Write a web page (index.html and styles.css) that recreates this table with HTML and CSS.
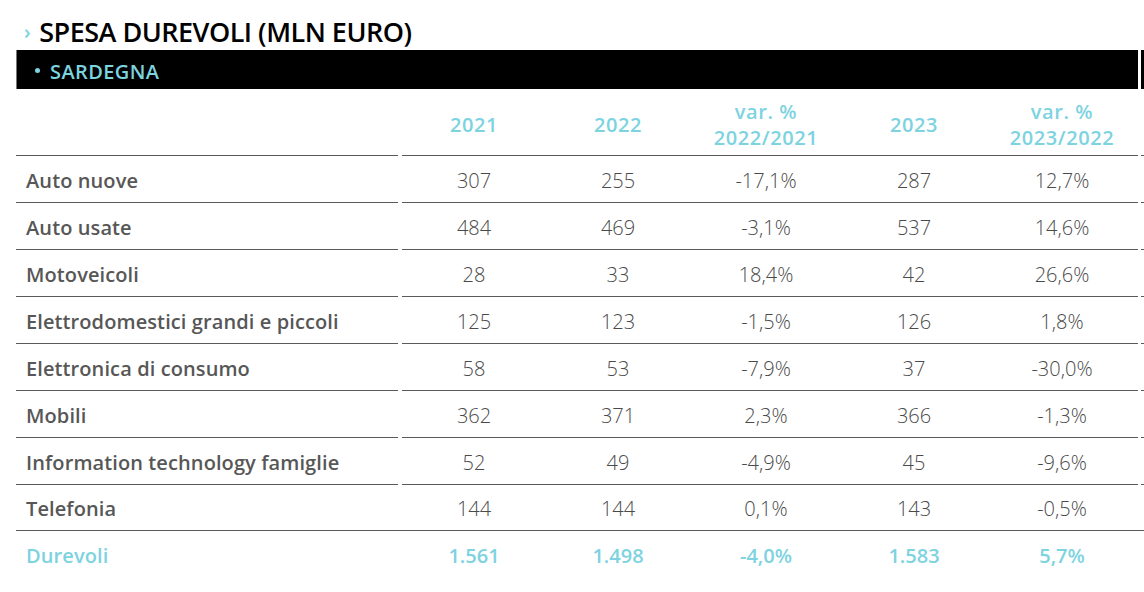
FILE: index.html
```html
<!DOCTYPE html>
<html lang="it">
<head>
<meta charset="utf-8">
<title>Spesa durevoli</title>
<link rel="stylesheet" href="styles.css">
</head>
<body>
<div class="page">
  <h1 class="title"><span class="chev">›</span>SPESA DUREVOLI (MLN EURO)</h1>
  <div class="bar">
    <div class="bar-main"><span class="dot"></span>SARDEGNA</div>
    <div class="bar-extra"></div>
  </div>
  <div class="table">
    <div class="row head">
      <div class="label"></div>
      <div class="vals">
        <div class="c n">2021</div>
        <div class="c n">2022</div>
        <div class="c w">var. %<br>2022/2021</div>
        <div class="c n">2023</div>
        <div class="c w">var. %<br>2023/2022</div>
      </div>
      <div class="extra"></div>
    </div>
    <div class="row">
      <div class="label">Auto nuove</div>
      <div class="vals"><div class="c n">307</div><div class="c n">255</div><div class="c w">-17,1%</div><div class="c n">287</div><div class="c w">12,7%</div></div>
      <div class="extra"></div>
    </div>
    <div class="row">
      <div class="label">Auto usate</div>
      <div class="vals"><div class="c n">484</div><div class="c n">469</div><div class="c w">-3,1%</div><div class="c n">537</div><div class="c w">14,6%</div></div>
      <div class="extra"></div>
    </div>
    <div class="row">
      <div class="label">Motoveicoli</div>
      <div class="vals"><div class="c n">28</div><div class="c n">33</div><div class="c w">18,4%</div><div class="c n">42</div><div class="c w">26,6%</div></div>
      <div class="extra"></div>
    </div>
    <div class="row">
      <div class="label">Elettrodomestici grandi e piccoli</div>
      <div class="vals"><div class="c n">125</div><div class="c n">123</div><div class="c w">-1,5%</div><div class="c n">126</div><div class="c w">1,8%</div></div>
      <div class="extra"></div>
    </div>
    <div class="row">
      <div class="label">Elettronica di consumo</div>
      <div class="vals"><div class="c n">58</div><div class="c n">53</div><div class="c w">-7,9%</div><div class="c n">37</div><div class="c w">-30,0%</div></div>
      <div class="extra"></div>
    </div>
    <div class="row">
      <div class="label">Mobili</div>
      <div class="vals"><div class="c n">362</div><div class="c n">371</div><div class="c w">2,3%</div><div class="c n">366</div><div class="c w">-1,3%</div></div>
      <div class="extra"></div>
    </div>
    <div class="row">
      <div class="label">Information technology famiglie</div>
      <div class="vals"><div class="c n">52</div><div class="c n">49</div><div class="c w">-4,9%</div><div class="c n">45</div><div class="c w">-9,6%</div></div>
      <div class="extra"></div>
    </div>
    <div class="row solid">
      <div class="label">Telefonia</div>
      <div class="vals"><div class="c n">144</div><div class="c n">144</div><div class="c w">0,1%</div><div class="c n">143</div><div class="c w">-0,5%</div></div>
      <div class="extra"></div>
    </div>
    <div class="row total">
      <div class="label">Durevoli</div>
      <div class="vals"><div class="c n">1.561</div><div class="c n">1.498</div><div class="c w">-4,0%</div><div class="c n">1.583</div><div class="c w">5,7%</div></div>
      <div class="extra"></div>
    </div>
  </div>
</div>
</body>
</html>
```

FILE: styles.css
```css
html, body {
  margin: 0;
  padding: 0;
  background: #ffffff;
  overflow: hidden;
}

body {
  font-family: "Open Sans", "Noto Sans", sans-serif;
  color: #4d4d4d;
}

.page {
  width: 1240px;
  padding-left: 16px;
}

.title {
  margin: 0;
  padding: 14px 0 0 8px;
  height: 36px;
  box-sizing: content-box;
  font-size: 27px;
  line-height: 36px;
  font-weight: 600;
  color: #000;
  letter-spacing: -0.5px;
}

.chev {
  color: #7dd3df;
  font-size: 20px;
  margin-right: 9px;
  position: relative;
  top: -3px;
}

.bar {
  display: flex;
  height: 39px;
}

.bar-main {
  width: 1122px;
  background: #000;
  border-left: 1px solid #777;
  box-sizing: border-box;
  display: flex;
  align-items: center;
  padding-left: 18px;
  padding-top: 3px;
  color: #7dd3df;
  font-size: 20px;
  font-weight: 600;
  letter-spacing: 0.4px;
}

.dot {
  width: 5px;
  height: 5px;
  border-radius: 50%;
  background: #7dd3df;
  margin-right: 10px;
  margin-top: -1px;
}

.bar-extra {
  margin-left: 3px;
  width: 100px;
  background: #000;
}

.row {
  display: flex;
  height: 47px;
}

.label,
.vals,
.extra {
  box-sizing: border-box;
  border-bottom: 1px solid #5a5a5a;
  height: 100%;
  display: flex;
  align-items: center;
}

.label {
  width: 382px;
  margin-right: 4px;
  padding-left: 10px;
  padding-top: 2px;
  font-size: 20px;
  font-weight: 600;
  letter-spacing: 0.1px;
  color: #575757;
}

.vals {
  width: 736px;
  margin-right: 3px;
  padding-top: 2px;
}

.extra {
  width: 100px;
}

.c {
  text-align: center;
  font-size: 20px;
  font-weight: 300;
  color: #4a4a4a;
}

.c.n {
  width: 144px;
}

.c.w {
  width: 152px;
}

.row.head {
  height: 67px;
}

.row.head .vals {
  padding-top: 6px;
}

.row.head .c {
  color: #7dd3df;
  font-weight: 600;
  font-size: 20px;
  line-height: 26px;
  letter-spacing: 0.6px;
}

.row.solid {
  border-bottom: 1px solid #5a5a5a;
  height: 45px;
}

.row.solid .label,
.row.solid .vals,
.row.solid .extra {
  border-bottom: none;
  margin-right: 0;
}

.row.solid .label {
  width: 386px;
}

.row.solid .vals {
  width: 739px;
}

.row.total .label,
.row.total .vals,
.row.total .extra {
  border-bottom: none;
}

.row.total .label,
.row.total .c {
  color: #7dd3df;
  font-weight: 600;
}
```
